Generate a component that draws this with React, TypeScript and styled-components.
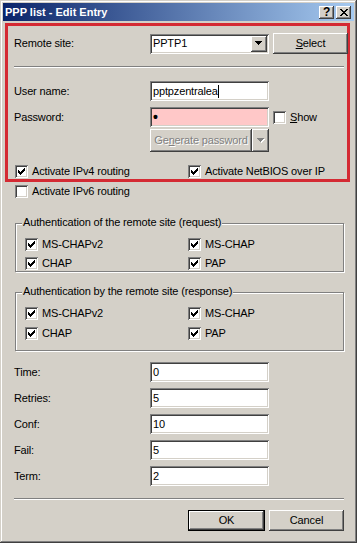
import styled, { createGlobalStyle } from "styled-components";

const GlobalStyle = createGlobalStyle`
  html, body {
    margin: 0;
    padding: 0;
    background: #d4d0c8;
  }
  body {
    font-family: "Liberation Sans", Arial, sans-serif;
    font-size: 11px;
    line-height: 13px;
    letter-spacing: -0.15px;
    color: #000;
  }
`;

const raised = `
  box-shadow: inset -1px -1px #404040, inset 1px 1px #ffffff,
    inset -2px -2px #808080, inset 2px 2px #d4d0c8;
`;

const sunken = `
  box-shadow: inset 1px 1px #808080, inset -1px -1px #ffffff,
    inset 2px 2px #404040, inset -2px -2px #d4d0c8;
`;

const Window = styled.div`
  width: 357px;
  height: 543px;
  box-sizing: border-box;
  padding: 3px;
  background: #d4d0c8;
  box-shadow: inset -1px -1px #404040, inset 1px 1px #d4d0c8,
    inset -2px -2px #808080, inset 2px 2px #ffffff;
  display: flex;
  flex-direction: column;
`;

const TitleBar = styled.div`
  height: 18px;
  display: flex;
  align-items: center;
  justify-content: space-between;
  padding: 0 3px 0 2px;
  background: linear-gradient(to right, #0a246a, #a6caf0);
`;

const Title = styled.span`
  color: #fff;
  font-weight: bold;
  letter-spacing: 0;
  white-space: nowrap;
`;

const CaptionButtons = styled.div`
  display: flex;
  gap: 2px;
`;

const CaptionButton = styled.div`
  width: 15px;
  height: 13px;
  box-sizing: border-box;
  background: #d4d0c8;
  ${raised}
  display: flex;
  align-items: center;
  justify-content: center;
  font-weight: bold;
  font-size: 12px;
  line-height: 11px;
  padding-top: 1px;
`;

const Highlight = styled.section`
  margin: 2px 4px 0 2px;
  border: 3px solid #d42a33;
  padding: 7px 3px 1px 6px;
  display: flex;
  flex-direction: column;
`;

const Rest = styled.div`
  padding: 0 10px 0 11px;
  display: flex;
  flex-direction: column;
`;

const FormRow = styled.div<{ $top?: number }>`
  display: grid;
  grid-template-columns: 132px 119px auto;
  column-gap: 4px;
  align-items: center;
  margin-top: ${(p) => p.$top ?? 0}px;
`;

const Label = styled.span`
  white-space: nowrap;
`;

const TextBox = styled.div<{ $bg?: string }>`
  width: 119px;
  height: 20px;
  box-sizing: border-box;
  padding: 2px 2px 2px 3px;
  background: ${(p) => p.$bg ?? "#fff"};
  ${sunken}
  display: flex;
  align-items: center;
  white-space: nowrap;
  overflow: hidden;
`;

const Caret = styled.span`
  display: inline-block;
  width: 1px;
  height: 13px;
  background: #000;
`;

const Dot = styled.span`
  font-size: 14px;
  font-weight: bold;
  line-height: 13px;
`;

const ComboBox = styled.div`
  width: 119px;
  height: 20px;
  box-sizing: border-box;
  padding: 2px;
  background: #fff;
  ${sunken}
  display: flex;
  align-items: stretch;
`;

const ComboText = styled.span`
  flex: 1;
  padding-left: 1px;
  display: flex;
  align-items: center;
`;

const DropButton = styled.div`
  width: 16px;
  box-sizing: border-box;
  background: #d4d0c8;
  ${raised}
  display: flex;
  align-items: center;
  justify-content: center;
`;

const PushButton = styled.button<{ $w?: number; $default?: boolean }>`
  width: ${(p) => p.$w ?? 75}px;
  height: 21px;
  box-sizing: border-box;
  border: none;
  margin: 0;
  padding: 0;
  background: #d4d0c8;
  font: inherit;
  letter-spacing: inherit;
  color: #000;
  ${(p) =>
    p.$default
      ? `box-shadow: inset 0 0 0 1px #000, inset -2px -2px #404040, inset 2px 2px #ffffff,
          inset -3px -3px #808080, inset 3px 3px #d4d0c8;`
      : raised}
`;

const Accel = styled.span`
  text-decoration: underline;
  text-underline-offset: 1px;
`;

const SplitButton = styled.div`
  display: flex;
  width: 119px;
  height: 23px;
`;

const SplitMain = styled.div`
  width: 102px;
  box-sizing: border-box;
  background: #d4d0c8;
  ${raised}
  display: flex;
  align-items: center;
  justify-content: center;
  color: #808080;
  text-shadow: 1px 1px 0 #fff;
  white-space: nowrap;
`;

const SplitArrow = styled.div`
  flex: 1;
  box-sizing: border-box;
  background: #d4d0c8;
  ${raised}
  display: flex;
  align-items: center;
  justify-content: center;
`;

const Separator = styled.div<{ $top: number }>`
  margin-top: ${(p) => p.$top}px;
  border-top: 1px solid #808080;
  border-bottom: 1px solid #fff;
`;

const CheckGrid = styled.div<{ $top: number; $col: number; $left: number; $gap?: number }>`
  display: grid;
  grid-template-columns: ${(p) => p.$col}px 1fr;
  row-gap: ${(p) => p.$gap ?? 6}px;
  margin-top: ${(p) => p.$top}px;
  padding-left: ${(p) => p.$left}px;
`;

const CheckItem = styled.label<{ $left?: number }>`
  display: flex;
  align-items: center;
  gap: 4px;
  height: 13px;
  white-space: nowrap;
  margin-left: ${(p) => p.$left ?? 0}px;
`;

const Box = styled.span`
  width: 13px;
  height: 13px;
  flex: none;
  box-sizing: border-box;
  background: #fff;
  ${sunken}
  display: flex;
  align-items: center;
  justify-content: center;
`;

const Group = styled.div<{ $top: number; $bottom: number }>`
  margin: ${(p) => p.$top}px 0 0 1px;
  width: 329px;
  box-sizing: border-box;
  border: 1px solid #808080;
  box-shadow: inset 1px 1px #fff, 1px 1px #fff;
  padding-bottom: ${(p) => p.$bottom}px;
  display: flex;
  flex-direction: column;
`;

const GroupTitle = styled.span`
  align-self: flex-start;
  margin: -8px 0 0 6px;
  padding: 0 1px;
  background: #d4d0c8;
  white-space: nowrap;
`;

const FieldList = styled.div`
  display: flex;
  flex-direction: column;
  gap: 6px;
  margin-top: 11px;
`;

const ButtonRow = styled.div`
  display: flex;
  justify-content: flex-end;
  gap: 4px;
  margin-top: 10px;
`;

function CheckMark() {
  return (
    <svg width="7" height="7" viewBox="0 0 7 7" shapeRendering="crispEdges">
      <path
        fill="#000"
        d="M6 0h1v1h-1z M5 1h2v1h-2z M0 2h1v1h-1z M4 2h3v1h-3z M0 3h2v1h-2z M3 3h3v1h-3z M0 4h5v1h-5z M1 5h3v1h-3z M2 6h1v1h-1z"
      />
    </svg>
  );
}

function Arrow({ disabled }: { disabled?: boolean }) {
  const d = "M0 0h7v1h-7z M1 1h5v1h-5z M2 2h3v1h-3z M3 3h1v1h-1z";
  return (
    <svg width="8" height="5" viewBox="0 0 8 5" shapeRendering="crispEdges">
      {disabled && <path fill="#fff" transform="translate(1 1)" d={d} />}
      <path fill={disabled ? "#808080" : "#000"} d={d} />
    </svg>
  );
}

function CloseGlyph() {
  return (
    <svg width="8" height="7" viewBox="0 0 8 7" shapeRendering="crispEdges">
      <path
        fill="#000"
        d="M0 0h2v1h-2z M6 0h2v1h-2z M1 1h2v1h-2z M5 1h2v1h-2z M2 2h4v1h-4z M3 3h2v1h-2z M2 4h4v1h-4z M1 5h2v1h-2z M5 5h2v1h-2z M0 6h2v1h-2z M6 6h2v1h-2z"
      />
    </svg>
  );
}

function Check({ label, checked, left }: { label: React.ReactNode; checked?: boolean; left?: number }) {
  return (
    <CheckItem $left={left}>
      <Box>{checked && <CheckMark />}</Box>
      <span>{label}</span>
    </CheckItem>
  );
}

const fields = [
  { label: "Time:", value: "0" },
  { label: "Retries:", value: "5" },
  { label: "Conf:", value: "10" },
  { label: "Fail:", value: "5" },
  { label: "Term:", value: "2" },
];

export default function App() {
  return (
    <>
      <GlobalStyle />
      <Window>
        <TitleBar>
          <Title>PPP list - Edit Entry</Title>
          <CaptionButtons>
            <CaptionButton>?</CaptionButton>
            <CaptionButton>
              <CloseGlyph />
            </CaptionButton>
          </CaptionButtons>
        </TitleBar>

        <Highlight>
          <FormRow>
            <Label>Remote site:</Label>
            <ComboBox>
              <ComboText>PPTP1</ComboText>
              <DropButton>
                <Arrow />
              </DropButton>
            </ComboBox>
            <PushButton>
              <Accel>S</Accel>elect
            </PushButton>
          </FormRow>

          <Separator $top={12} />

          <FormRow $top={13}>
            <Label>User name:</Label>
            <TextBox>
              pptpzentralea
              <Caret />
            </TextBox>
          </FormRow>

          <FormRow $top={6}>
            <Label>Password:</Label>
            <TextBox $bg="#ffc8c8">
              <Dot>•</Dot>
            </TextBox>
            <Check
              label={
                <>
                  <Accel>S</Accel>how
                </>
              }
            />
          </FormRow>

          <FormRow $top={2}>
            <span />
            <SplitButton>
              <SplitMain>
                Ge<Accel>n</Accel>erate password
              </SplitMain>
              <SplitArrow>
                <Arrow disabled />
              </SplitArrow>
            </SplitButton>
          </FormRow>

          <CheckGrid $top={13} $col={173} $left={1}>
            <Check label="Activate IPv4 routing" checked />
            <Check label="Activate NetBIOS over IP" checked />
          </CheckGrid>
        </Highlight>

        <Rest>
          <CheckGrid $top={3} $col={173} $left={1}>
            <Check label="Activate IPv6 routing" />
          </CheckGrid>

          <Group $top={25} $bottom={1}>
            <GroupTitle>Authentication of the remote site (request)</GroupTitle>
            <CheckGrid $top={9} $col={163} $left={9}>
              <Check label="MS-CHAPv2" checked />
              <Check label="MS-CHAP" checked />
              <Check label="CHAP" checked />
              <Check label="PAP" checked />
            </CheckGrid>
          </Group>

          <Group $top={20} $bottom={10}>
            <GroupTitle>Authentication by the remote site (response)</GroupTitle>
            <CheckGrid $top={9} $col={163} $left={9} $gap={7}>
              <Check label="MS-CHAPv2" checked />
              <Check label="MS-CHAP" checked />
              <Check label="CHAP" checked />
              <Check label="PAP" checked />
            </CheckGrid>
          </Group>

          <FieldList>
            {fields.map((f) => (
              <FormRow key={f.label}>
                <Label>{f.label}</Label>
                <TextBox>{f.value}</TextBox>
              </FormRow>
            ))}
          </FieldList>

          <Separator $top={12} />

          <ButtonRow>
            <PushButton $w={77} $default>
              OK
            </PushButton>
            <PushButton>Cancel</PushButton>
          </ButtonRow>
        </Rest>
      </Window>
    </>
  );
}
